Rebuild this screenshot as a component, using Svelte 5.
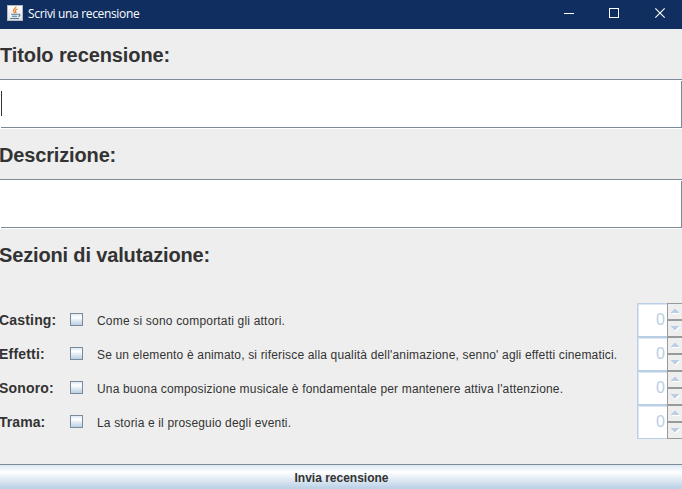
<script>
  const sections = [
    { name: 'Casting:', nameSpacing: 0.18, text: 'Come si sono comportati gli attori.', spacing: 0.19 },
    { name: 'Effetti:', nameSpacing: 0.2, text: "Se un elemento è animato, si riferisce alla qualità dell'animazione, senno' agli effetti cinematici.", spacing: 0.17 },
    { name: 'Sonoro:', nameSpacing: 0.17, text: "Una buona composizione musicale è fondamentale per mantenere attiva l'attenzione.", spacing: 0.168 },
    { name: 'Trama:', nameSpacing: 0.05, text: 'La storia e il proseguio degli eventi.', spacing: 0.16 }
  ];
</script>

<main class="window">
  <header class="titlebar">
    <svg class="java" width="16" height="16" viewBox="0 0 16 16" fill="none">
      <defs>
        <linearGradient id="tile" x1="0" y1="0" x2="0" y2="1">
          <stop offset="0" stop-color="#fff" /><stop offset="1" stop-color="#dfe2e4" />
        </linearGradient>
      </defs>
      <rect x=".5" y=".5" width="15" height="15" fill="url(#tile)" stroke="#b4b9bf" />
      <path d="M8.900 1.500c.8 1.700-3.400 2.700-2.400 4.400L7.800 8M10.500 4C8.300 4.900 7.900 5.700 8.800 6.700c.4.5.1.9-.3 1.300" stroke="#e8812d" stroke-width="1.200" />
      <path d="M4.300 9.300h6.500M5 11.300h5M3.300 13.500h8.700M11 9.300c2.600-.6 2.500 1.600.3 2.200" stroke="#4f7896" stroke-width="1.100" />
    </svg>
    <span class="caption">Scrivi una recensione</span>
    <svg class="controls" width="138" height="29" viewBox="0 0 138 29" fill="none" stroke="#fff">
      <path d="M20 13.500h10" />
      <rect x="65.500" y="8.500" width="9" height="9" />
      <path d="M111.300 8.300l9.400 9.400M120.700 8.300l-9.400 9.400" stroke-width="1.100" />
    </svg>
  </header>

  <h1 class="first">Titolo recensione:</h1>
  <div class="field"><i class="caret"></i></div>
  <h1>Descrizione:</h1>
  <div class="field"></div>
  <h1>Sezioni di valutazione:</h1>

  <section>
    {#each sections as s}
      <div class="row">
        <b class="name" style="letter-spacing: {s.nameSpacing}px">{s.name}</b>
        <i class="check"></i>
        <span class="text" style="letter-spacing: {s.spacing}px">{s.text}</span>
        <div class="spinner">
          <span class="value">0</span>
          <div class="arrows">
            <div class="arrow">
              <svg width="9" height="6" viewBox="0 0 9 6" shape-rendering="crispEdges"><path d="M1 5h8v1H1z" fill="#fff" /><path d="M3 1h2v1h1v1h1v1h1v1H0V4h1V3h1V2h1z" fill="#b8cfe5" /></svg>
            </div>
            <div class="arrow down">
              <svg width="9" height="6" viewBox="0 0 9 6" shape-rendering="crispEdges"><path d="M8 1h1v1H8v1H7v1H6v1H4V4h1V3h1V2h1V1z" fill="#fff" /><path d="M0 0h8v1H7v1H6v1H5v1H3V3H2V2H1V1H0z" fill="#b8cfe5" /></svg>
            </div>
          </div>
        </div>
      </div>
    {/each}
  </section>
  <footer>Invia recensione</footer>
</main>

<style>
  :global(body) { margin: 0; }
  .window {
    width: 682px; height: 489px; overflow: hidden; box-sizing: border-box;
    display: flex; flex-direction: column;
    background: #eee; color: #333;
    font-family: "Liberation Sans", Arial, sans-serif;
  }
  .titlebar { height: 29px; flex: none; display: flex; background: #112e61; color: #fff; }
  .java { margin: 5px 5px 0 7px; }
  .caption { font: 12px/28px "Open Sans", sans-serif; letter-spacing: -.34px; white-space: nowrap; }
  .controls { margin-left: auto; }
  h1 {
    height: 50px; margin: 0; flex: none; font-size: 20px; line-height: 52px; font-weight: bold;
    white-space: nowrap; text-indent: -1px; letter-spacing: -.15px;
  }
  h1.first { text-indent: 0; letter-spacing: -.1px; }
  .field {
    height: 50px; flex: none; box-sizing: border-box;
    border-top: 1px solid #7a8a99; padding: 11px 0 0 1px;
    background:
      linear-gradient(#7a8a99, #7a8a99) 1px 47px / 681px 1px no-repeat,
      linear-gradient(#7a8a99, #7a8a99) 681px 1px / 1px 47px no-repeat,
      #fff;
  }
  .caret { display: block; width: 1px; height: 25px; background: #333; }
  section { margin-top: 24px; flex: none; }
  .row { height: 34px; display: flex; align-items: flex-start; }
  .name { width: 70px; font-size: 14px; line-height: 34px; text-indent: -1px; }
  .check {
    width: 13px; height: 13px; margin: 10px 14px 0 0; box-sizing: border-box;
    border: 1px solid #7a8a99; background: linear-gradient(#dde8f3, #fff 30%, #b8cfe5);
  }
  .text { flex: 1; font-size: 12px; line-height: 36px; white-space: nowrap; }
  .spinner { width: 45px; height: 34px; display: flex; }
  .value {
    width: 30px; height: 34px; box-sizing: border-box; padding-right: 2px;
    border: 1px solid #b8cfe5; border-right: 0; background: #fff; color: #b8cfe5;
    box-shadow: inset 1px 1px #dce7f2; font-size: 16px; line-height: 32px; text-align: right;
  }
  .arrows { width: 15px; }
  .arrow {
    height: 17px; box-sizing: border-box; border: 1px solid #999; border-right: 0;
    display: flex; padding: 4px 0 0 3px;
  }
  .arrow.down { padding-top: 5px; }
  .arrow svg { flex: none; }
  footer {
    margin-top: auto; height: 25px; flex: none; box-sizing: border-box; border-top: 1px solid #7a8a99;
    background: linear-gradient(#dde8f3, #fff 30%, #b8cfe5); padding-left: 1px;
    font-size: 12px; line-height: 26px; font-weight: bold; text-align: center;
  }
</style>
